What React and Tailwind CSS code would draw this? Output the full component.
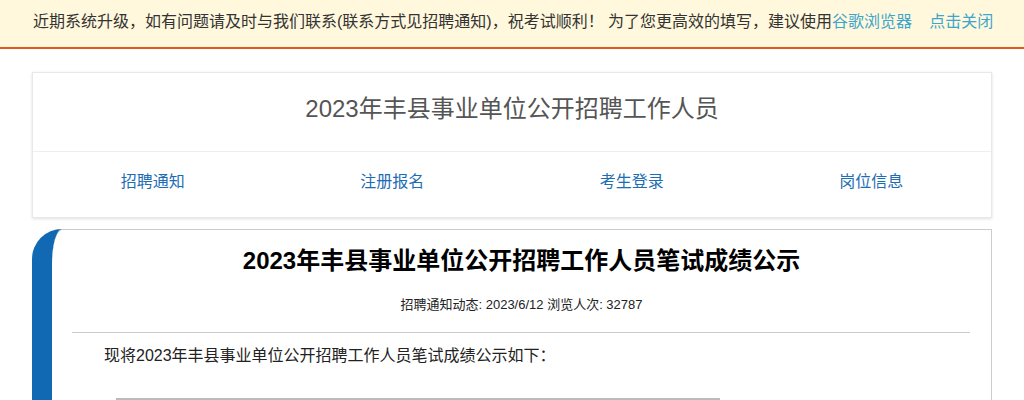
import React from 'react';

const font = { fontFamily: '"Liberation Sans", Arial, "Noto Sans CJK SC", sans-serif' };

const navItems = ['招聘通知', '注册报名', '考生登录', '岗位信息'];

const NoticeBar = () => (
  <div className="bg-[#fff8dc] border-b-2 border-[#e05a1c]">
    <div className="w-[960px] mx-auto h-[47px] flex items-center pl-[1px] pb-[4px] text-[16px] text-[#333] whitespace-nowrap">
      <span>近期系统升级，如有问题请及时与我们联系(联系方式见招聘通知)，祝考试顺利！ 为了您更高效的填写，建议使用</span>
      <a className="text-[#3ea6cc] cursor-pointer">谷歌浏览器</a>
      <a className="text-[#3ea6cc] ml-[17px] cursor-pointer">点击关闭</a>
    </div>
  </div>
);

const HeaderCard = () => (
  <div className="w-[960px] mx-auto mt-[23px] bg-white border border-[#e8e8e8] shadow-[0_1px_3px_rgba(0,0,0,0.12)]">
    <div className="pt-[19px] pb-[25px] leading-[34px] text-center text-[24px] text-[#555]">
      2023年丰县事业单位公开招聘工作人员
    </div>
    <div className="border-t border-[#eeeeee] grid grid-cols-4">
      {navItems.map(item => (
        <a key={item} className="pt-[20px] pb-[25px] leading-[20px] text-center text-[16px] text-[#1d6db4] cursor-pointer">
          {item}
        </a>
      ))}
    </div>
  </div>
);

const ContentCard = () => (
  <div className="w-[960px] mx-auto mt-[11px] bg-[#1169b4] rounded-tl-[30px] pl-[20px] h-[200px]">
    <div className="bg-white h-full border-t border-r border-[#cccccc] rounded-tl-[10px_35px] px-[20px]">
      <h1 className="pt-[15px] leading-[32px] text-center text-[24px] font-bold text-black">
        2023年丰县事业单位公开招聘工作人员笔试成绩公示
      </h1>
      <div className="mt-[20px] leading-[16px] text-center text-[13px] text-[#222]">
        招聘通知动态: 2023/6/12 浏览人次: 32787
      </div>
      <div className="mt-[19px] border-t border-[#cccccc] mr-[1px]"></div>
      <p className="mt-[11px] leading-[24px] text-[16px] text-[#222] indent-[32px]">
        现将2023年丰县事业单位公开招聘工作人员笔试成绩公示如下：
      </p>
      <div className="mt-[30px] ml-[44px] w-[604px] border-t-2 border-[#bbbbbb] h-[20px]"></div>
    </div>
  </div>
);

export default function App() {
  return (
    <div className="min-h-[400px] bg-white" style={font}>
      <NoticeBar />
      <HeaderCard />
      <ContentCard />
    </div>
  );
}
